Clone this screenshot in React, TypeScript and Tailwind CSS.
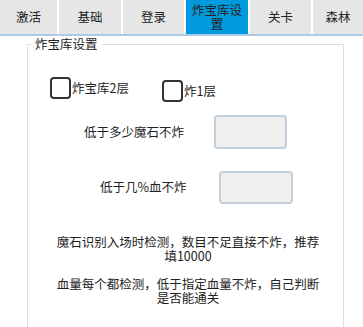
const TABS = [
  { label: "激活", w: "w-[57px]" },
  { label: "基础", w: "w-[62px]" },
  { label: "登录", w: "w-[61px]" },
  { label: "炸宝库设置", w: "w-[62px]", active: true },
  { label: "关卡", w: "w-[61px]" },
  { label: "森林", w: "flex-1" },
];

function Checkbox({ label, className = "" }: { label: string; className?: string }) {
  return (
    <label className={`flex items-center ${className}`}>
      <span className="w-[21px] h-[22px] border-2 border-[#333] rounded-[4px] bg-white" />
      <span className="ml-[1px]">{label}</span>
    </label>
  );
}

export default function App() {
  return (
    <div
      className="w-[363px] h-[327px] overflow-hidden bg-white text-[#222] text-[12.5px]"
      style={{ fontFamily: '"Noto Sans CJK SC", "Noto Sans", sans-serif' }}
    >
      {/* tab bar */}
      <div className="flex gap-[2px] h-[36px] border-b-2 border-[#aec9e4] bg-white">
        {TABS.map((t) => (
          <div
            key={t.label}
            className={`${t.w} flex items-center justify-center text-center leading-[14px] px-[6px] ${
              t.active ? "bg-[#009ade]" : "bg-[#e6e6e6]"
            }`}
          >
            {t.label}
          </div>
        ))}
      </div>

      {/* group box */}
      <fieldset className="ml-[27px] w-[317px] border border-[#dedede] pb-[40px]">
        <legend className="ml-[3px] px-[4px] leading-[16px] text-[#222]">炸宝库设置</legend>

        <div className="flex items-start mt-[25px] ml-[22px]">
          <Checkbox label="炸宝库2层" />
          <Checkbox label="炸1层" className="ml-[33px] mt-[3px]" />
        </div>

        <div className="flex items-center mt-[13px] ml-[56px]">
          <span className="w-[130px]">低于多少魔石不炸</span>
          <div className="w-[73px] h-[34px] bg-[#f0f0f0] border-2 border-[#c4cfdd] rounded-[4px]" />
        </div>

        <div className="flex items-center mt-[22px] ml-[72px]">
          <span className="w-[119px]">低于几%血不炸</span>
          <div className="w-[74px] h-[33px] bg-[#f0f0f0] border-2 border-[#c4cfdd] rounded-[4px]" />
        </div>

        <div className="ml-[27px] w-[266px] mt-[31px] text-center leading-[14px]">
          <p>魔石识别入场时检测，数目不足直接不炸，推荐填10000</p>
          <p className="mt-[14px]">血量每个都检测，低于指定血量不炸，自己判断是否能通关</p>
        </div>
      </fieldset>
    </div>
  );
}
